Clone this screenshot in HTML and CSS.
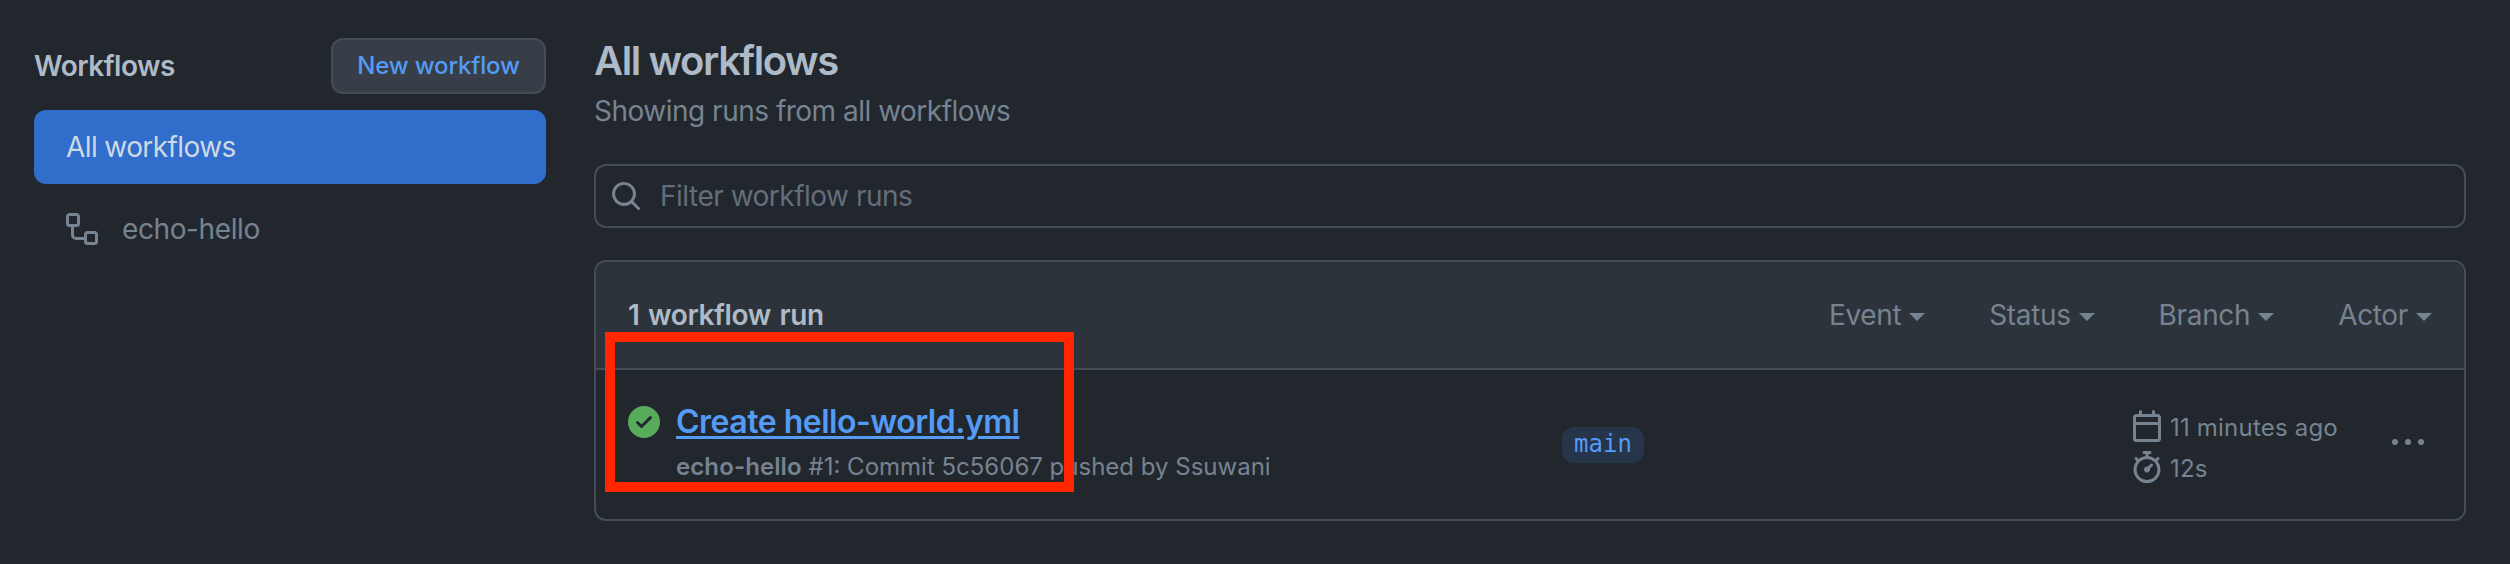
FILE: index.html
```
<!DOCTYPE html>
<html lang="en">
<head>
<meta charset="utf-8">
<title>Workflow runs</title>
<link rel="stylesheet" href="styles.css">
</head>
<body>
<div class="page">
  <aside class="sidebar">
    <div class="sidebar-head">
      <h2 class="sidebar-title">Workflows</h2>
      <a class="button">New workflow</a>
    </div>
    <nav class="menu">
      <a class="menu-item selected">All workflows</a>
      <a class="menu-item">
        <svg class="icon" viewBox="0 0 16 16"><path d="M0 1.75C0 .784.784 0 1.75 0h3.5C6.216 0 7 .784 7 1.75v3.5A1.75 1.75 0 0 1 5.25 7H4v4a1 1 0 0 0 1 1h4v-1.25C9 9.784 9.784 9 10.75 9h3.5c.966 0 1.75.784 1.75 1.75v3.5A1.75 1.75 0 0 1 14.25 16h-3.5A1.75 1.75 0 0 1 9 14.25v-.75H5A2.5 2.5 0 0 1 2.5 11V7h-.75A1.75 1.75 0 0 1 0 5.25Zm1.75-.25a.25.25 0 0 0-.25.25v3.5c0 .138.112.25.25.25h3.5a.25.25 0 0 0 .25-.25v-3.5a.25.25 0 0 0-.25-.25Zm9 9a.25.25 0 0 0-.25.25v3.5c0 .138.112.25.25.25h3.5a.25.25 0 0 0 .25-.25v-3.5a.25.25 0 0 0-.25-.25Z"/></svg>
        <span class="menu-label">echo-hello</span>
      </a>
    </nav>
  </aside>
  <main class="content">
    <h1 class="title">All workflows</h1>
    <p class="subtitle">Showing runs from all workflows</p>
    <div class="filter">
      <svg class="icon" viewBox="0 0 16 16"><path d="M10.68 11.74a6 6 0 0 1-7.922-8.982 6 6 0 0 1 8.982 7.922l3.04 3.04a.749.749 0 0 1-.326 1.275.749.749 0 0 1-.734-.215ZM11.5 7a4.499 4.499 0 1 0-8.997 0A4.499 4.499 0 0 0 11.5 7Z"/></svg>
      <span class="placeholder">Filter workflow runs</span>
    </div>
    <section class="box">
      <header class="box-head">
        <strong class="count">1 workflow run</strong>
        <div class="filters">
          <span class="select">Event</span>
          <span class="select">Status</span>
          <span class="select">Branch</span>
          <span class="select">Actor</span>
        </div>
      </header>
      <div class="run">
        <svg class="icon success" viewBox="0 0 16 16"><path d="M8 16A8 8 0 1 1 8 0a8 8 0 0 1 0 16Zm3.78-9.72a.751.751 0 0 0-.018-1.042.751.751 0 0 0-1.042-.018L6.75 9.19 5.28 7.72a.751.751 0 0 0-1.042.018.751.751 0 0 0-.018 1.042l2 2a.75.75 0 0 0 1.06 0Z"/></svg>
        <div class="run-info">
          <a class="run-link">Create hello-world.yml</a>
          <span class="run-detail"><b class="run-name">echo-hello</b> #1: Commit 5c56067 pushed by Ssuwani</span>
        </div>
        <div class="branch-cell"><span class="branch">main</span></div>
        <div class="times">
          <div class="time">
            <svg class="icon" viewBox="0 0 16 16"><path d="M4.75 0a.75.75 0 0 1 .75.75V2h5V.75a.75.75 0 0 1 1.5 0V2h1.25c.966 0 1.75.784 1.75 1.75v10.5A1.75 1.75 0 0 1 13.25 16H2.75A1.75 1.75 0 0 1 1 14.25V3.75C1 2.784 1.784 2 2.75 2H4V.75A.75.75 0 0 1 4.75 0ZM2.5 7.5v6.75c0 .138.112.25.25.25h10.5a.25.25 0 0 0 .25-.25V7.5Zm10.75-4H2.75a.25.25 0 0 0-.25.25V6h11V3.75a.25.25 0 0 0-.25-.25Z"/></svg>
            <span class="time-label">11 minutes ago</span>
          </div>
          <div class="time">
            <svg class="icon" viewBox="0 0 16 16"><path d="M5.75.75A.75.75 0 0 1 6.5 0h3a.75.75 0 0 1 0 1.5h-.75v1l-.001.041a6.724 6.724 0 0 1 3.464 1.435l.007-.006.75-.75a.749.749 0 0 1 1.275.326.749.749 0 0 1-.215.734l-.75.75-.006.007a6.75 6.75 0 1 1-10.548 0L2.72 5.03l-.75-.75a.751.751 0 0 1 .018-1.042.751.751 0 0 1 1.042-.018l.75.75.007.006A6.72 6.72 0 0 1 7.25 2.541V1.5H6.5a.75.75 0 0 1-.75-.75ZM8 14.5a5.25 5.25 0 1 0-.001-10.501A5.25 5.25 0 0 0 8 14.5Zm.389-6.7 1.33-1.33a.75.75 0 1 1 1.061 1.06L9.45 8.861A1.503 1.503 0 0 1 8 10.75a1.499 1.499 0 1 1 .389-2.95Z"/></svg>
            <span class="time-label">12s</span>
          </div>
        </div>
        <svg class="icon kebab" viewBox="0 0 32 32"><circle cx="3" cy="16" r="3"/><circle cx="16" cy="16" r="3"/><circle cx="29" cy="16" r="3"/></svg>
        <div class="highlight"></div>
      </div>
    </section>
  </main>
</div>
</body>
</html>
```
FILE: styles.css
```
* {
  box-sizing: border-box;
}

body {
  margin: 0;
  background: #22272e;
  color: #adbac7;
  font-family: Inter, "Liberation Sans", sans-serif;
  font-size: 28px;
  line-height: 42px;
  letter-spacing: -0.5px;
  white-space: nowrap;
}

.page {
  display: flex;
  gap: 48px;
  height: 564px;
  padding: 38px 44px 0 34px;
  overflow: hidden;
}

.icon {
  flex: none;
  width: 32px;
  height: 32px;
  fill: #768390;
}

/* Sidebar */
.sidebar {
  flex: none;
  width: 512px;
}

.sidebar-head {
  display: flex;
  align-items: center;
  justify-content: space-between;
  height: 56px;
}

.sidebar-title {
  margin: 0;
  font-size: 28px;
  font-weight: 600;
}

.button {
  width: 215px;
  height: 56px;
  border: 2px solid #444c56;
  border-radius: 12px;
  background: #373e47;
  color: #539bf5;
  font-size: 24px;
  font-weight: 500;
  line-height: 52px;
  letter-spacing: -0.15px;
  text-align: center;
}

.menu {
  margin-top: 16px;
}

.menu-item {
  display: flex;
  align-items: center;
  gap: 24px;
  height: 74px;
  margin-bottom: 8px;
  padding: 0 32px;
  border-radius: 12px;
  color: #768390;
}

.menu-label {
  letter-spacing: -0.4px;
}

.selected {
  background: #316dca;
  color: #cdd9e5;
  letter-spacing: -0.6px;
}

/* Main column */
.content {
  flex: 1;
  min-width: 0;
}

.title {
  margin: 0;
  font-size: 40px;
  font-weight: 600;
  line-height: 46px;
  letter-spacing: -1.4px;
}

.subtitle {
  margin: 6px 0 0;
  color: #768390;
}

.filter {
  display: flex;
  align-items: center;
  gap: 18px;
  height: 64px;
  margin-top: 32px;
  padding-left: 14px;
  border: 2px solid #444c56;
  border-radius: 12px;
}

.placeholder {
  color: #636e7b;
}

.box {
  height: 261px;
  margin-top: 32px;
  border: 2px solid #444c56;
  border-radius: 12px;
}

.box-head {
  display: flex;
  align-items: center;
  justify-content: space-between;
  height: 108px;
  padding: 0 32px;
  border-bottom: 2px solid #444c56;
  border-radius: 10px 10px 0 0;
  background: #2d333b;
}

.count {
  font-weight: 600;
  letter-spacing: -0.4px;
  word-spacing: 2px;
}

.filters {
  display: flex;
  gap: 64px;
  color: #768390;
  letter-spacing: -0.35px;
}

.select {
  display: flex;
  align-items: center;
  gap: 8px;
}

.select::after {
  content: "";
  margin-top: 4px;
  border: 8px solid transparent;
  border-top-color: #768390;
  border-bottom: 0;
}

/* Run row */
.run {
  position: relative;
  display: flex;
  height: 149px;
  padding: 0 40px 0 32px;
}

.success {
  margin-top: 36px;
  fill: #57ab5a;
}

.run-info {
  display: flex;
  flex-direction: column;
  width: 886px;
  margin: 28px 0 0 16px;
}

.run-link {
  align-self: flex-start;
  color: #539bf5;
  font-size: 32px;
  font-weight: 600;
  line-height: 48px;
  text-decoration: underline;
  text-decoration-thickness: 3px;
  text-underline-offset: 3px;
}

.run-detail {
  color: #768390;
  font-size: 24px;
  line-height: 42px;
  letter-spacing: 0;
}

.run-name {
  font-weight: 600;
  letter-spacing: 0.1px;
}

.branch-cell {
  flex: 1;
  padding-top: 57px;
}

.branch {
  display: block;
  width: 82px;
  height: 36px;
  border-radius: 12px;
  background: #263549;
  color: #539bf5;
  font-family: "DejaVu Sans Mono", monospace;
  font-size: 24px;
  line-height: 34px;
  letter-spacing: 0;
  text-align: center;
}

.times {
  display: flex;
  flex-direction: column;
  gap: 9px;
  width: 261px;
  padding-top: 40px;
}

.time {
  display: flex;
  align-items: center;
  gap: 7px;
  height: 32px;
  color: #768390;
  font-size: 24px;
  letter-spacing: 0.2px;
}

.time-label {
  padding-top: 4px;
}

.kebab {
  margin-top: 56px;
}

/* Annotation frame over the run row */
.highlight {
  position: absolute;
  top: -38px;
  left: 9px;
  width: 469px;
  height: 160px;
  border: 10px solid #ff2600;
}
```
